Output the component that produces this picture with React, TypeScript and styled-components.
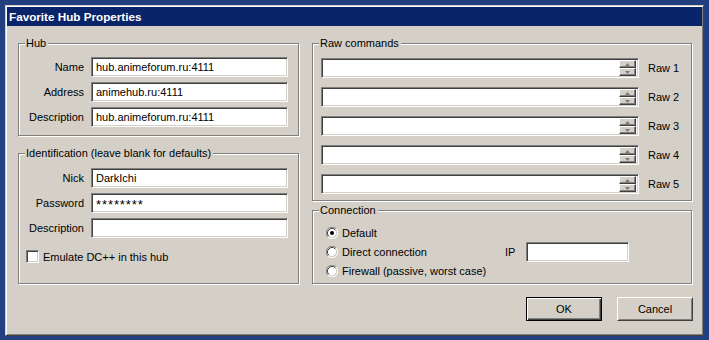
import React from 'react';
import styled, { createGlobalStyle } from 'styled-components';

const Global = createGlobalStyle`
  html, body { margin: 0; padding: 0; background: #223f80; }
  body { font-family: "Liberation Sans", Arial, sans-serif; font-size: 11px; color: #000; }
  #root { width: 709px; height: 340px; overflow: hidden; }
  * { box-sizing: border-box; }
`;

const Desktop = styled.div`
  width: 709px;
  height: 340px;
  padding: 5px 0 0 5px;
  background: #223f80;
`;

const Window = styled.div`
  width: 699px;
  height: 331px;
  border: 1px solid;
  border-color: #d4d0c8 #404040 #404040 #d4d0c8;
  box-shadow: inset 1px 1px 0 #fff, inset -1px -1px 0 #808080;
  padding: 1px;
  background: #d4d0c8;
  display: flex;
  flex-direction: column;
`;

const TitleBar = styled.div`
  flex: none;
  height: 19px;
  background: #0a246a;
  color: #fff;
  font-weight: bold;
  font-size: 11.7px;
  display: flex;
  align-items: center;
  padding-left: 2px;
`;

const Body = styled.div`
  padding: 17px 9px 0 11px;
  display: flex;
  flex-direction: column;
`;

const Columns = styled.div`
  display: flex;
  gap: 13px;
`;

const Column = styled.div<{ $w: number; $gap: number }>`
  width: ${(p) => p.$w}px;
  display: flex;
  flex-direction: column;
  gap: ${(p) => p.$gap}px;
`;

const Group = styled.div<{ $pad: string }>`
  position: relative;
  border: 1px solid #808080;
  box-shadow: inset 1px 1px 0 #fff, 1px 1px 0 #fff;
  padding: ${(p) => p.$pad};
`;

const Legend = styled.span`
  position: absolute;
  top: -7px;
  left: 6px;
  padding: 0 2px 0 1px;
  background: #d4d0c8;
  line-height: 13px;
  white-space: nowrap;
`;

const FieldGrid = styled.div`
  display: grid;
  grid-template-columns: 58px 1fr;
  column-gap: 7px;
  row-gap: 5px;
  align-items: center;
`;

const FieldLabel = styled.label`
  text-align: right;
  white-space: nowrap;
`;

const TextBox = styled.input<{ $w?: number; $secret?: boolean }>`
  width: ${(p) => (p.$w ? `${p.$w}px` : '100%')};
  height: 20px;
  margin: 0;
  background: #fff;
  border: 1px solid;
  border-color: #808080 #fff #fff #808080;
  box-shadow: inset 1px 1px 0 #404040, inset -1px -1px 0 #d4d0c8;
  padding: ${(p) => (p.$secret ? '3px 0 0 4px' : '0 0 0 4px')};
  font-family: "Liberation Sans", Arial, sans-serif;
  font-size: ${(p) => (p.$secret ? '13px' : '11px')};
  color: #000;
  outline: none;
  letter-spacing: ${(p) => (p.$secret ? '0.9px' : 'normal')};
`;

const CheckRow = styled.label`
  display: flex;
  align-items: center;
  gap: 4px;
  height: 13px;
  margin-top: 12px;
  white-space: nowrap;
`;

const CheckBox = styled.span`
  width: 13px;
  height: 13px;
  background: #fff;
  border: 1px solid;
  border-color: #808080 #fff #fff #808080;
  box-shadow: inset 1px 1px 0 #404040, inset -1px -1px 0 #d4d0c8;
`;

const RawList = styled.div`
  display: flex;
  flex-direction: column;
  gap: 9px;
`;

const RawRow = styled.div`
  display: flex;
  align-items: center;
  gap: 9px;
`;

const Combo = styled.div`
  width: 318px;
  height: 20px;
  display: flex;
  background: #fff;
  border: 1px solid;
  border-color: #808080 #fff #fff #808080;
  box-shadow: inset 1px 1px 0 #404040, inset -1px -1px 0 #d4d0c8;
`;

const ComboText = styled.input`
  flex: 1;
  min-width: 0;
  border: none;
  background: transparent;
  outline: none;
  margin: 0;
  padding: 0 0 0 4px;
  font-family: "Liberation Sans", Arial, sans-serif;
  font-size: 11px;
`;

const Spinner = styled.div`
  width: 17px;
  margin: 1px 2px 1px 0;
  display: flex;
  flex-direction: column;
`;

const SpinHalf = styled.div`
  flex: 1;
  background: #d4d0c8;
  border: 1px solid;
  border-color: #fff #404040 #404040 #fff;
  box-shadow: inset -1px -1px 0 #808080;
  display: flex;
  align-items: center;
  justify-content: center;
`;

const RawLabel = styled.span`
  white-space: nowrap;
`;

const ConnGrid = styled.div`
  display: grid;
  grid-template-columns: 179px 21px 103px;
  grid-auto-rows: 19px;
  align-items: center;
`;

const RadioRow = styled.label<{ $row: number }>`
  grid-column: 1;
  grid-row: ${(p) => p.$row};
  display: flex;
  align-items: center;
  gap: 4px;
  white-space: nowrap;
`;

const IpLabel = styled.span`
  grid-column: 2;
  grid-row: 2;
`;

const IpBox = styled.div`
  grid-column: 3;
  grid-row: 2;
  display: flex;
`;

const ButtonRow = styled.div`
  display: flex;
  justify-content: flex-end;
  gap: 15px;
  margin-top: 13px;
`;

const Button = styled.button<{ $default?: boolean }>`
  width: 76px;
  height: 24px;
  margin: 0;
  padding: 0;
  background: #d4d0c8;
  font-family: "Liberation Sans", Arial, sans-serif;
  font-size: 11px;
  color: #000;
  border: 1px solid;
  border-color: ${(p) => (p.$default ? '#000' : '#fff #404040 #404040 #fff')};
  box-shadow: ${(p) =>
    p.$default
      ? 'inset 1px 1px 0 #fff, inset -1px -1px 0 #404040, inset -2px -2px 0 #808080'
      : 'inset 1px 1px 0 #d4d0c8, inset -1px -1px 0 #808080'};
`;

const Arrow = ({ up }: { up?: boolean }) => (
  <svg width="5" height="3" viewBox="0 0 5 3">
    <path d={up ? 'M2.5 0 L5 3 L0 3 Z' : 'M0 0 L5 0 L2.5 3 Z'} fill="#7a7a7a" />
  </svg>
);

const Radio = ({ checked }: { checked?: boolean }) => (
  <svg width="12" height="12" viewBox="0 0 12 12">
    <path d="M10.24 1.76 A6 6 0 0 0 1.76 10.24" fill="none" stroke="#808080" strokeWidth="1" />
    <path d="M1.76 10.24 A6 6 0 0 0 10.24 1.76" fill="none" stroke="#ffffff" strokeWidth="1" />
    <circle cx="6" cy="6" r="4.5" fill="#fff" />
    <path d="M9.18 2.82 A4.5 4.5 0 0 0 2.82 9.18" fill="none" stroke="#404040" strokeWidth="1" />
    <path d="M2.82 9.18 A4.5 4.5 0 0 0 9.18 2.82" fill="none" stroke="#d4d0c8" strokeWidth="1" />
    {checked && <circle cx="6" cy="6" r="2" fill="#000" />}
  </svg>
);

export default function App() {
  const raws = [1, 2, 3, 4, 5];
  return (
    <>
      <Global />
      <Desktop>
        <Window>
          <TitleBar>Favorite Hub Properties</TitleBar>
          <Body>
            <Columns>
              <Column $w={281} $gap={17}>
                <Group $pad="13px 10px 8px 7px">
                  <Legend>Hub</Legend>
                  <FieldGrid>
                    <FieldLabel>Name</FieldLabel>
                    <TextBox readOnly value="hub.animeforum.ru:4111" />
                    <FieldLabel>Address</FieldLabel>
                    <TextBox readOnly value="animehub.ru:4111" />
                    <FieldLabel>Description</FieldLabel>
                    <TextBox readOnly value="hub.animeforum.ru:4111" />
                  </FieldGrid>
                </Group>
                <Group $pad="14px 10px 20px 7px">
                  <Legend>Identification (leave blank for defaults)</Legend>
                  <FieldGrid>
                    <FieldLabel>Nick</FieldLabel>
                    <TextBox readOnly value="DarkIchi" />
                    <FieldLabel>Password</FieldLabel>
                    <TextBox readOnly value="********" $secret />
                    <FieldLabel>Description</FieldLabel>
                    <TextBox readOnly value="" />
                  </FieldGrid>
                  <CheckRow>
                    <CheckBox />
                    Emulate DC++ in this hub
                  </CheckRow>
                </Group>
              </Column>
              <Column $w={380} $gap={9}>
                <Group $pad="14px 8px 6px 8px">
                  <Legend>Raw commands</Legend>
                  <RawList>
                    {raws.map((n) => (
                      <RawRow key={n}>
                        <Combo>
                          <ComboText readOnly value="" />
                          <Spinner>
                            <SpinHalf>
                              <Arrow up />
                            </SpinHalf>
                            <SpinHalf>
                              <Arrow />
                            </SpinHalf>
                          </Spinner>
                        </Combo>
                        <RawLabel>Raw {n}</RawLabel>
                      </RawRow>
                    ))}
                  </RawList>
                </Group>
                <Group $pad="12px 8px 3px 13px">
                  <Legend>Connection</Legend>
                  <ConnGrid>
                    <RadioRow $row={1}>
                      <Radio checked />
                      Default
                    </RadioRow>
                    <RadioRow $row={2}>
                      <Radio />
                      Direct connection
                    </RadioRow>
                    <RadioRow $row={3}>
                      <Radio />
                      Firewall (passive, worst case)
                    </RadioRow>
                    <IpLabel>IP</IpLabel>
                    <IpBox>
                      <TextBox readOnly value="" $w={103} />
                    </IpBox>
                  </ConnGrid>
                </Group>
              </Column>
            </Columns>
            <ButtonRow>
              <Button $default>OK</Button>
              <Button>Cancel</Button>
            </ButtonRow>
          </Body>
        </Window>
      </Desktop>
    </>
  );
}
